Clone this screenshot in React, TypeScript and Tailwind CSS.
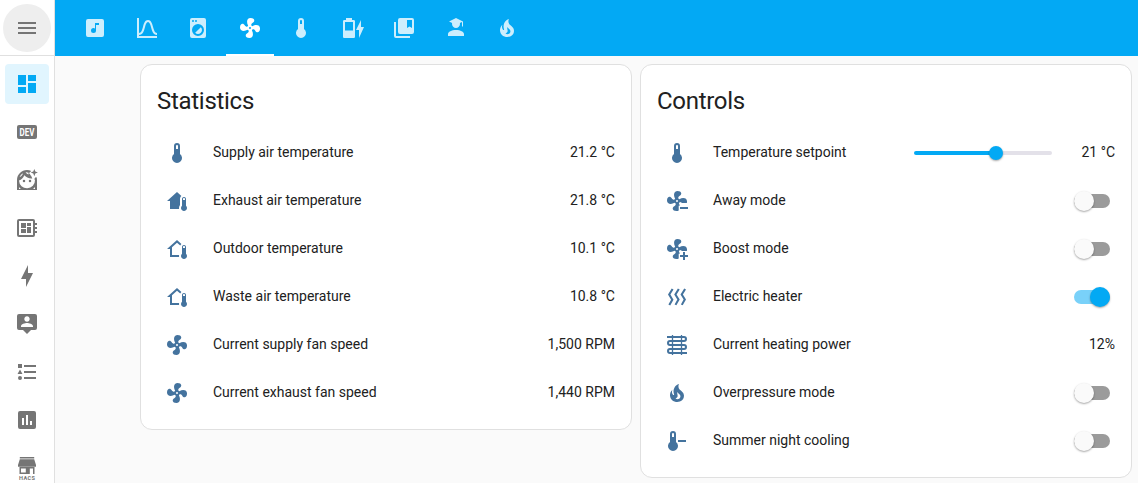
import type { ReactNode } from "react";

const paths = {
  menu: "M3,6H21V8H3V6M3,11H21V13H3V11M3,16H21V18H3V16Z",
  dashboard: "M13,3V9H21V3M13,21H21V11H13M3,21H11V15H3M3,13H11V3H3V13Z",
  board:
    "M22,9V7H20V5A2,2 0 0,0 18,3H4A2,2 0 0,0 2,5V19A2,2 0 0,0 4,21H18A2,2 0 0,0 20,19V17H22V15H20V13H22V11H20V9H22M18,19H4V5H18V19M6,13H11V17H6V13M12,7H16V10H12V7M6,7H11V12H6V7M12,11H16V17H12V11Z",
  bolt: "M11 15H6L13 1V9H18L11 23V15Z",
  account:
    "M20,2H4A2,2 0 0,0 2,4V16A2,2 0 0,0 4,18H8L12,22L16,18H20A2,2 0 0,0 22,16V4A2,2 0 0,0 20,2M12,4.3C13.5,4.3 14.7,5.5 14.7,7C14.7,8.5 13.5,9.7 12,9.7C10.5,9.7 9.3,8.5 9.3,7C9.3,5.5 10.5,4.3 12,4.3M18,15H6V14.1C6,12.1 10,11 12,11C14,11 18,12.1 18,14.1V15Z",
  list: "M5,9.5L7.5,14H2.5L5,9.5M3,4H7V8H3V4M5,20A2,2 0 0,0 7,18A2,2 0 0,0 5,16A2,2 0 0,0 3,18A2,2 0 0,0 5,20M9,5V7H21V5H9M9,19H21V17H9V19M9,13H21V11H9V13Z",
  chartBox:
    "M9,17H7V10H9V17M13,17H11V7H13V17M17,17H15V13H17V17M19,3H5A2,2 0 0,0 3,5V19A2,2 0 0,0 5,21H19A2,2 0 0,0 21,19V5A2,2 0 0,0 19,3Z",
  music:
    "M16,9H13V14.5A2.5,2.5 0 0,1 10.5,17A2.5,2.5 0 0,1 8,14.5A2.5,2.5 0 0,1 10.5,12C11.07,12 11.58,12.19 12,12.5V7H16M19,3H5A2,2 0 0,0 3,5V19A2,2 0 0,0 5,21H19A2,2 0 0,0 21,19V5A2,2 0 0,0 19,3Z",
  bell: "M9.96,11.31C10.82,8.1 11.5,6 13,6C14.5,6 15.18,8.1 16.04,11.31C17,14.92 18.1,19 22,19V17C19.8,17 19,14.54 17.97,10.8C17.08,7.46 16.15,4 13,4C9.85,4 8.92,7.46 8.03,10.8C7.03,14.54 6.2,17 4,17V2H2V22H22V20H4V19C7.9,19 9,14.92 9.96,11.31Z",
  washer:
    "M14.83,11.17C16.39,12.73 16.39,15.27 14.83,16.83C13.27,18.39 10.73,18.39 9.17,16.83L14.83,11.17M6,2H18A2,2 0 0,1 20,4V20A2,2 0 0,1 18,22H6A2,2 0 0,1 4,20V4A2,2 0 0,1 6,2M7,4A1,1 0 0,0 6,5A1,1 0 0,0 7,6A1,1 0 0,0 8,5A1,1 0 0,0 7,4M10,4A1,1 0 0,0 9,5A1,1 0 0,0 10,6A1,1 0 0,0 11,5A1,1 0 0,0 10,4M12,8A6,6 0 0,0 6,14A6,6 0 0,0 12,20A6,6 0 0,0 18,14A6,6 0 0,0 12,8Z",
  fan: "M12,11A1,1 0 0,0 11,12A1,1 0 0,0 12,13A1,1 0 0,0 13,12A1,1 0 0,0 12,11M12.5,2C17,2 17.11,5.57 14.75,6.75C13.76,7.24 13.32,8.29 13.13,9.22C13.61,9.42 14.03,9.73 14.35,10.13C18.05,8.13 22.03,8.92 22.03,12.5C22.03,17 18.46,17.1 17.28,14.73C16.78,13.74 15.72,13.3 14.79,13.11C14.59,13.59 14.28,14 13.88,14.34C15.87,18.03 15.08,22 11.5,22C7,22 6.91,18.42 9.27,17.24C10.25,16.75 10.69,15.71 10.89,14.79C10.4,14.59 9.97,14.27 9.65,13.87C5.96,15.85 2,15.07 2,11.5C2,7 5.56,6.89 6.74,9.26C7.24,10.25 8.29,10.68 9.22,10.87C9.41,10.39 9.73,9.97 10.14,9.65C8.15,5.96 8.94,2 12.5,2Z",
  fanPart:
    "M12.5,2C17,2 17.11,5.57 14.75,6.75C13.76,7.24 13.32,8.29 13.13,9.22C13.61,9.42 14.03,9.73 14.35,10.13C18.05,8.13 22.03,8.92 22.03,12.5C22.03,13.1 21.97,13.6 21.85,14H17C16.4,13.5 15.5,13.25 14.79,13.11C14.59,13.59 14.28,14 13.88,14.34C14.3,15.1 14.6,15.9 14.75,16.7H13.7V21.4C13.1,21.87 12.35,22 11.5,22C7,22 6.91,18.42 9.27,17.24C10.25,16.75 10.69,15.71 10.89,14.79C10.4,14.59 9.97,14.27 9.65,13.87C5.96,15.85 2,15.07 2,11.5C2,7 5.56,6.89 6.74,9.26C7.24,10.25 8.29,10.68 9.22,10.87C9.41,10.39 9.73,9.97 10.14,9.65C8.15,5.96 8.94,2 12.5,2M12,11A1,1 0 0,0 11,12A1,1 0 0,0 12,13A1,1 0 0,0 13,12A1,1 0 0,0 12,11Z",
  thermometer: "M15 13V5A3 3 0 0 0 9 5V13A5 5 0 1 0 15 13M12 4A1 1 0 0 1 13 5V8H11V5A1 1 0 0 1 12 4Z",
  thermometerMinus:
    "M13 11H21V13H13V11M11 13V5A3 3 0 0 0 5 5V13A5 5 0 1 0 11 13M8 4A1 1 0 0 1 9 5V8H7V5A1 1 0 0 1 8 4Z",
  battery:
    "M23,11H20V4L15,14H18V22M12,14.5H4V6H12M12.67,4H11V2H5V4H3.33A1.33,1.33 0 0,0 2,5.33V20.67C2,21.4 2.6,22 3.33,22H12.67C13.4,22 14,21.4 14,20.67V5.33C14,4.6 13.4,4 12.67,4Z",
  bookmark:
    "M20,2H8A2,2 0 0,0 6,4V16A2,2 0 0,0 8,18H20A2,2 0 0,0 22,16V4A2,2 0 0,0 20,2M20,12L17.5,10.5L15,12V4H20V12M4,6H2V20A2,2 0 0,0 4,22H18V20H4V6Z",
  school:
    "M16 8C16 10.21 14.21 12 12 12C9.79 12 8 10.21 8 8L8.11 7.06L5 5.5L12 2L19 5.5V10.5H18V6L15.89 7.06L16 8M12 14C16.42 14 20 15.79 20 18V20H4V18C4 15.79 7.58 14 12 14Z",
  fire: "M17.66 11.2C17.43 10.9 17.15 10.64 16.89 10.38C16.22 9.78 15.46 9.35 14.82 8.72C13.33 7.26 13 4.85 13.95 3C13 3.23 12.17 3.75 11.46 4.32C8.87 6.4 7.85 10.07 9.07 13.22C9.11 13.32 9.15 13.42 9.15 13.55C9.15 13.77 9 13.97 8.8 14.05C8.57 14.15 8.33 14.09 8.14 13.93C8.08 13.88 8.04 13.83 8 13.76C6.87 12.33 6.69 10.28 7.45 8.64C5.78 10 4.87 12.3 5 14.47C5.06 14.97 5.12 15.47 5.29 15.97C5.43 16.57 5.7 17.17 6 17.7C7.08 19.43 8.95 20.67 10.96 20.92C13.1 21.19 15.39 20.8 17.03 19.32C18.86 17.66 19.5 15 18.56 12.72L18.43 12.46C18.22 12 17.66 11.2 17.66 11.2M14.5 17.5C14.22 17.74 13.76 18 13.4 18.1C12.28 18.5 11.16 17.94 10.5 17.28C11.69 17 12.4 16.12 12.61 15.23C12.78 14.43 12.46 13.77 12.33 13C12.21 12.26 12.23 11.63 12.5 10.94C12.69 11.32 12.89 11.7 13.13 12C13.9 13 15.11 13.44 15.37 14.8C15.41 14.94 15.43 15.08 15.43 15.23C15.46 16.05 15.1 16.95 14.5 17.5H14.5Z",
  homeOutline:
    "M19 8C20.11 8 21 8.9 21 10V16.76C21.61 17.31 22 18.11 22 19C22 20.66 20.66 22 19 22C17.34 22 16 20.66 16 19C16 18.11 16.39 17.31 17 16.76V10C17 8.9 17.9 8 19 8M19 9C18.45 9 18 9.45 18 10V11H20V10C20 9.45 19.55 9 19 9M12 5.69L7 10.19V18H14.1L14 19L14.1 20H5V12H2L12 3L16.4 6.96C15.89 7.4 15.5 7.97 15.25 8.61L12 5.69Z",
  homeFilled:
    "M19 8C20.11 8 21 8.9 21 10V16.76C21.61 17.31 22 18.11 22 19C22 20.66 20.66 22 19 22C17.34 22 16 20.66 16 19C16 18.11 16.39 17.31 17 16.76V10C17 8.9 17.9 8 19 8M19 9C18.45 9 18 9.45 18 10V11H20V10C20 9.45 19.55 9 19 9M12 3L16.4 6.96C15.54 7.69 15 8.78 15 10V16C14.37 16.83 14 17.87 14 19L14.1 20H5V12H2L12 3Z",
  heat: "M8.5 4.5L5.4 9.5L8.5 14.7L5.2 20.5L3.4 19.6L6.1 14.7L3 9.5L6.7 3.6L8.5 4.5M14.7 4.4L11.6 9.5L14.7 14.5L11.4 20.3L9.6 19.4L12.3 14.5L9.2 9.5L12.9 3.5L14.7 4.4M21 4.4L17.9 9.5L21 14.5L17.7 20.3L15.9 19.4L18.6 14.5L15.5 9.5L19.2 3.5L21 4.4",
};

type IconName = keyof typeof paths;

function Svg({ children }: { children: ReactNode }) {
  return (
    <svg viewBox="0 0 24 24" className="size-6 shrink-0" fill="currentColor">
      {children}
    </svg>
  );
}

function Icon({ name }: { name: IconName }) {
  return (
    <Svg>
      <path fillRule="evenodd" d={paths[name]} />
    </Svg>
  );
}

function DevIcon() {
  return (
    <Svg>
      <rect x="2" y="5" width="20" height="14" rx="2" />
      <text
        x="4.6"
        y="15.6"
        fill="#fff"
        fontSize="10"
        fontWeight="700"
        textLength="14.8"
        lengthAdjust="spacingAndGlyphs"
        className="font-['Roboto',sans-serif]"
      >
        DEV
      </text>
    </Svg>
  );
}

function FaceIcon() {
  return (
    <Svg>
      <path
        fillRule="evenodd"
        d="M12 2C6.5 2 2 6.5 2 12V22H22V12C22 11 21.85 10.1 21.6 9.2L20.2 9.4L19.2 11.2C19.3 11.6 20 11.5 20 12A8 8 0 0 1 4 12.6C6.4 11.8 8.4 9.8 9.3 7.3C11.2 9.5 14 10.7 17.3 10.4L16 7.4L13 6L16.3 3C15 2.3 13.5 2 12 2M4.6 9A8 8 0 0 1 8 5.2C7.6 6.9 6.4 8.3 4.6 9M10.6 4.2C12.5 4 14.2 4.7 15.6 6.7C13.4 6.9 11.5 5.9 10.6 4.2M4 19C4.6 19.9 5.4 20.6 6 21H4V19M20 19V21H18C18.8 20.5 19.5 19.8 20 19Z"
      />
      <circle cx="9" cy="13" r="1.25" />
      <circle cx="15" cy="13" r="1.25" />
      <path d="M19.3 1L20.3 3.6L22.9 4.6L20.3 5.6L19.3 8.2L18.3 5.6L15.7 4.6L18.3 3.6Z" />
    </Svg>
  );
}

function HacsIcon() {
  return (
    <Svg>
      <path d="M4.8 1H19.2V2.6H4.8ZM4.8 3.2H19.2L21 9V10.8H3V9Z" />
      <path fillRule="evenodd" d="M4.5 11H19.5V18H18V12.5H14.8V18H4.5ZM6 12.5V16.6H10.8V12.5Z" />
      <text
        x="4"
        y="23.6"
        fontSize="5.6"
        fontWeight="700"
        textLength="16"
        className="font-['Roboto',sans-serif]"
      >
        HACS
      </text>
    </Svg>
  );
}

function CoilIcon() {
  return (
    <Svg>
      <path
        fill="none"
        stroke="currentColor"
        strokeWidth="2"
        d="M2 4H19A2 2 0 0 1 19 8H5A2 2 0 0 0 5 12H19A2 2 0 0 1 19 16H5A2 2 0 0 0 5 20H22"
      />
      <path fill="none" stroke="currentColor" strokeWidth="1.3" d="M7.5 2V22M16.5 2V22" />
    </Svg>
  );
}

function FanModeIcon({ plus = false }: { plus?: boolean }) {
  return (
    <Svg>
      <path fillRule="evenodd" d={paths.fanPart} />
      <path d={plus ? "M18 15H20V18H23V20H20V23H18V20H15V18H18Z" : "M15 18H23V20H15Z"} />
    </Svg>
  );
}

function SideItem({ children, active = false }: { children: ReactNode; active?: boolean }) {
  return (
    <a
      className={
        active
          ? "flex h-10 w-11 shrink-0 items-center justify-center rounded bg-[#e1f5fe] text-[#03a9f4]"
          : "flex h-10 w-11 shrink-0 items-center justify-center rounded text-[#757575]"
      }
    >
      {children}
    </a>
  );
}

function Sidebar() {
  return (
    <aside className="flex h-full w-[55px] shrink-0 flex-col overflow-hidden border-r border-[#e0e0e0] bg-white">
      <div className="flex h-14 shrink-0 items-center justify-center border-b border-[#e0e0e0]">
        <button className="-mb-px flex size-12 shrink-0 items-center justify-center rounded-full bg-[#eeeeee] text-[#757575]">
          <Icon name="menu" />
        </button>
      </div>
      <nav className="flex flex-col items-center gap-2 pt-2">
        <SideItem active>
          <Icon name="dashboard" />
        </SideItem>
        <SideItem>
          <DevIcon />
        </SideItem>
        <SideItem>
          <FaceIcon />
        </SideItem>
        <SideItem>
          <Icon name="board" />
        </SideItem>
        <SideItem>
          <Icon name="bolt" />
        </SideItem>
        <SideItem>
          <Icon name="account" />
        </SideItem>
        <SideItem>
          <Icon name="list" />
        </SideItem>
        <SideItem>
          <Icon name="chartBox" />
        </SideItem>
        <SideItem>
          <HacsIcon />
        </SideItem>
      </nav>
    </aside>
  );
}

const tabs: IconName[] = [
  "music",
  "bell",
  "washer",
  "fan",
  "thermometer",
  "battery",
  "bookmark",
  "school",
  "fire",
];

function Header() {
  return (
    <header className="flex h-14 shrink-0 gap-[3.5px] bg-[#03a9f4] pl-4">
      {tabs.map((name) => (
        <a
          key={name}
          className={
            name === "fan"
              ? "flex w-12 items-center justify-center border-y-2 border-t-transparent border-b-white text-white"
              : "flex w-12 items-center justify-center text-[#cdeefd]"
          }
        >
          <Icon name={name} />
        </a>
      ))}
    </header>
  );
}

function Card({ title, children }: { title: string; children: ReactNode }) {
  return (
    <section className="w-[492px] rounded-xl border border-[#e0e0e0] bg-white px-4 pb-3">
      <h2 className="h-16 pt-3 text-2xl leading-[49px] tracking-[-0.012em]">{title}</h2>
      {children}
    </section>
  );
}

function Row({ icon, label, children }: { icon: ReactNode; label: string; children: ReactNode }) {
  return (
    <div className="flex h-12 items-center">
      <div className="flex w-10 justify-center text-[#44739e]">{icon}</div>
      <div className="ml-4 flex-1 pb-0.5 leading-5">{label}</div>
      {children}
    </div>
  );
}

function Value({ children }: { children: ReactNode }) {
  return <div className="pb-0.5 text-right leading-5">{children}</div>;
}

function Toggle({ on = false }: { on?: boolean }) {
  return (
    <div
      className={
        on
          ? "mr-[5px] flex h-3.5 w-9 items-center justify-end rounded-full bg-[#79d1f9]"
          : "mr-[5px] flex h-3.5 w-9 items-center rounded-full bg-[#9b9b9b]"
      }
    >
      <div
        className={
          on
            ? "size-5 shrink-0 rounded-full bg-[#03a9f4] shadow-[0_1px_2px_rgba(0,0,0,0.35)]"
            : "size-5 shrink-0 rounded-full bg-[#fafafa] shadow-[0_1px_2px_rgba(0,0,0,0.35)]"
        }
      />
    </div>
  );
}

function Slider() {
  return (
    <div className="flex w-[138px] items-center">
      <div className="h-1 w-[76px] rounded-l-full bg-[#03a9f4]" />
      <div className="z-10 -ml-px size-3.5 shrink-0 rounded-full bg-[#03a9f4] shadow-[0_1px_2px_rgba(0,0,0,0.35)]" />
      <div className="-ml-1 h-1 flex-1 rounded-r-full bg-[#e3e1e9]" />
    </div>
  );
}

export default function App() {
  return (
    <div className="flex h-[483px] w-[1138px] overflow-hidden bg-[#fafafa] font-['Roboto',sans-serif] text-sm text-[#212121]">
      <Sidebar />
      <div className="flex flex-1 flex-col">
        <Header />
        <main className="flex items-start gap-2 pt-2 pl-[85px]">
          <Card title="Statistics">
            <Row icon={<Icon name="thermometer" />} label="Supply air temperature">
              <Value>21.2 °C</Value>
            </Row>
            <Row icon={<Icon name="homeFilled" />} label="Exhaust air temperature">
              <Value>21.8 °C</Value>
            </Row>
            <Row icon={<Icon name="homeOutline" />} label="Outdoor temperature">
              <Value>10.1 °C</Value>
            </Row>
            <Row icon={<Icon name="homeOutline" />} label="Waste air temperature">
              <Value>10.8 °C</Value>
            </Row>
            <Row icon={<Icon name="fan" />} label="Current supply fan speed">
              <Value>1,500 RPM</Value>
            </Row>
            <Row icon={<Icon name="fan" />} label="Current exhaust fan speed">
              <Value>1,440 RPM</Value>
            </Row>
          </Card>
          <Card title="Controls">
            <Row icon={<Icon name="thermometer" />} label="Temperature setpoint">
              <Slider />
              <div className="w-[63px]">
                <Value>21 °C</Value>
              </div>
            </Row>
            <Row icon={<FanModeIcon />} label="Away mode">
              <Toggle />
            </Row>
            <Row icon={<FanModeIcon plus />} label="Boost mode">
              <Toggle />
            </Row>
            <Row icon={<Icon name="heat" />} label="Electric heater">
              <Toggle on />
            </Row>
            <Row icon={<CoilIcon />} label="Current heating power">
              <Value>12%</Value>
            </Row>
            <Row icon={<Icon name="fire" />} label="Overpressure mode">
              <Toggle />
            </Row>
            <Row icon={<Icon name="thermometerMinus" />} label="Summer night cooling">
              <Toggle />
            </Row>
          </Card>
        </main>
      </div>
    </div>
  );
}
